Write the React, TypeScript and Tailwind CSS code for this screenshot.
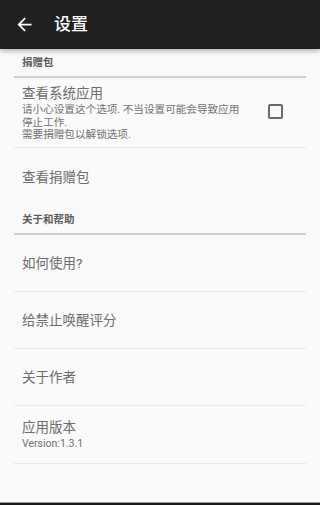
import React from 'react';

const font = { fontFamily: 'Roboto, "Noto Sans CJK SC", sans-serif' };

function Category({ label }: { label: string }) {
  return (
    <div className="mx-[14px] border-b-2 border-[#cfcfcf] px-2 pt-[7px] pb-[6px]">
      <div className="text-[10.5px] leading-[14px] font-bold text-[#5c5c5c]">{label}</div>
    </div>
  );
}

function Row({
  title,
  summary,
  last,
  tall,
}: {
  title: string;
  summary?: string;
  last?: boolean;
  tall?: boolean;
}) {
  return (
    <div
      className={`mx-[14px] flex flex-col justify-center px-2 ${tall ? 'h-[58px]' : 'h-[57px]'} ${
        last ? '' : 'border-b border-[#e7e7e7]'
      }`}
    >
      <div className="text-[13.5px] leading-[20px] text-[#6c6c6c]">{title}</div>
      {summary && <div className="text-[10.5px] leading-[14px] text-[#717171]">{summary}</div>}
    </div>
  );
}

export default function App() {
  return (
    <div className="flex h-[505px] w-[320px] flex-col bg-[#fafafa]" style={font}>
      <header className="relative z-10 flex h-[49px] flex-none items-center bg-[#212121] shadow-[0_2px_5px_rgba(0,0,0,0.3)]">
        <svg viewBox="0 0 24 24" className="ml-[14px] h-[21px] w-[21px] fill-white">
          <path d="M20 11H7.83l5.59-5.59L12 4l-8 8 8 8 1.41-1.41L7.83 13H20v-2z" />
        </svg>
        <div className="ml-[19px] text-[17px] font-medium text-white">设置</div>
      </header>

      <main className="flex-1">
        <Category label="捐赠包" />

        <div className="mx-[14px] flex items-start border-b border-[#e7e7e7] px-2 pt-[5px] pb-[5px]">
          <div className="flex-1">
            <div className="text-[13.5px] leading-[20px] text-[#6c6c6c]">查看系统应用</div>
            <div className="mt-px text-[10.6px] leading-[12.5px] whitespace-nowrap text-[#717171]">
              请小心设置这个选项. 不当设置可能会导致应用
              <br />
              停止工作.
              <br />
              需要捐赠包以解锁选项.
            </div>
          </div>
          <div className="mt-[21px] mr-[15px] h-[15px] w-[15px] rounded-[2px] border-2 border-[#6a6a6a]" />
        </div>

        <Row title="查看捐赠包" last tall />

        <Category label="关于和帮助" />
        <Row title="如何使用?" />
        <Row title="给禁止唤醒评分" />
        <Row title="关于作者" />
        <Row title="应用版本" summary="Version:1.3.1" tall />
      </main>

      <div className="h-[3px] flex-none border-t border-[#9a9a9a] bg-[#1a1a1a]" />
    </div>
  );
}
